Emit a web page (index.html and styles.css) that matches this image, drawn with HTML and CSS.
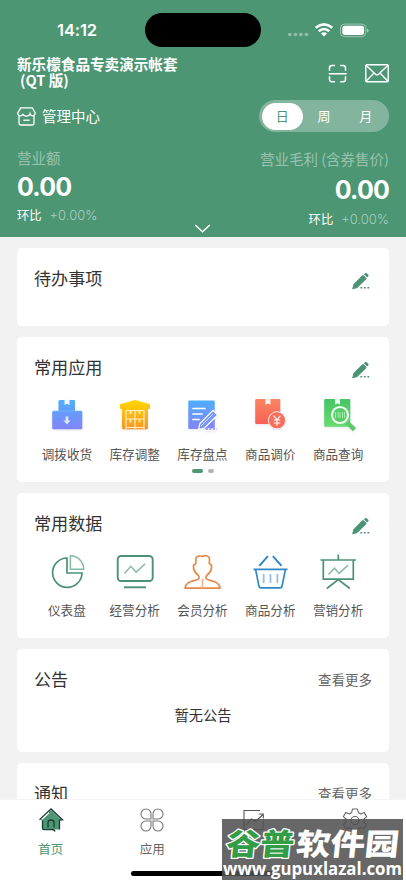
FILE: index.html
```html
<!DOCTYPE html>
<html lang="zh-CN">
<head>
<meta charset="utf-8">
<meta name="viewport" content="width=device-width, initial-scale=1">
<title>首页</title>
<link rel="stylesheet" href="styles.css">
</head>
<body>
<svg class="defs" width="0" height="0" aria-hidden="true">
  <defs>
    <linearGradient id="blue" x1="0" y1="0" x2="0" y2="1"><stop offset="0" stop-color="#4fadfc"/><stop offset="1" stop-color="#8384f8"/></linearGradient>
    <linearGradient id="gold" x1="0" y1="0" x2="0" y2="1"><stop offset="0" stop-color="#ffd900"/><stop offset="1" stop-color="#f99424"/></linearGradient>
    <linearGradient id="red" x1="0" y1="0" x2="0" y2="1"><stop offset="0" stop-color="#fb8562"/><stop offset="1" stop-color="#f76154"/></linearGradient>
    <linearGradient id="lime" x1="0" y1="0" x2="0" y2="1"><stop offset="0" stop-color="#46c567"/><stop offset="1" stop-color="#65dc6c"/></linearGradient>
    <symbol id="pencil" viewBox="0 0 18 18">
      <path d="M.7 16.8 2 12.3 10.900 3.300l3.400 3.200-9.200 9.100z" fill="#4b9374" stroke="#4b9374" stroke-width="1" stroke-linejoin="round"/>
      <path d="m11.900 2.300 1.200-1.100q.8-.7 1.600 0l1.600 1.600q.7.8 0 1.500l-1.100 1.200z" fill="#4b9374"/>
      <path d="M8.400 15.800h1.800M11.900 15.800h1.800M15.400 15.800h1.800" stroke="#4b9374" stroke-width="1.500"/>
    </symbol>
  </defs>
</svg>
<div class="phone">
  <header class="header">
    <div class="status">
      <span class="time">14:12</span>
      <span class="island"></span>
      <svg class="signals" width="84" height="20" viewBox="0 0 84 20" fill="#fff">
        <g opacity=".4"><circle cx="3.9" cy="14.5" r="1.8"/><circle cx="9.4" cy="14.5" r="1.8"/><circle cx="14.9" cy="14.5" r="1.8"/><circle cx="20.4" cy="14.5" r="1.8"/></g>
        <g fill="none" stroke="#fff" stroke-width="2.5"><path d="M29.700 7.800q8.300-6.800 16.600 0"/><path d="M32.700 11.200q5.300-4.400 10.600 0"/></g>
        <path d="M35 13.500q3-2.400 6 0l-3 3z"/>
        <rect x="54.5" y="4.1" width="25.3" height="12.6" rx="4" fill="none" stroke="#fff" opacity=".45"/>
        <rect x="56.3" y="5.8" width="21.8" height="9.1" rx="2.6"/><path d="M81 8.500q1.600.6 1.600 2t-1.600 2z" opacity=".5"/>
      </svg>
    </div>
    <div class="account">
      <h1 class="name"><span>新乐檬食品专卖演示帐套</span><span class="edition">(QT 版)</span></h1>
      <div class="actions">
        <svg width="20" height="20" viewBox="0 0 20 20" fill="none" stroke="#fff" stroke-width="1.5"><path d="M1.500 6.800V4q0-2.500 2.500-2.500h3M12.200 1.500H15q2.500 0 2.500 2.500v2.800M17.500 12.300v3q0 2.500-2.500 2.500h-2.800M7 17.800H4q-2.500 0-2.500-2.500v-3M.7 9.800h18"/></svg>
        <svg width="24" height="19" viewBox="0 0 24 19" fill="none" stroke="#fff" stroke-width="1.4"><rect x=".8" y=".8" width="22.400" height="17" rx="1"/><path d="m1 1.200 9.500 9q1.500 1.300 3 0l9.500-9M1 17.300l8-8.400M23 17.300l-8-8.400"/></svg>
      </div>
    </div>
    <div class="filters">
      <div class="center"><svg width="19" height="19" viewBox="0 0 19 19" fill="none" stroke="#fff" stroke-width="1.300"><path d="m3.700.8-2.900 5C.3 9.600 5.200 9.600 5.800 6.800c.7 3 6.400 3 7.200 0 .8 2.800 5.500 2.800 5.100-1l-2.800-5zM2 9v7q0 2 2 2h11q2 0 2-2V9"/><path d="M6.300 13.200h6.300"/></svg><span>管理中心</span></div>
      <div class="segment"><span class="active">日</span><span>周</span><span>月</span></div>
    </div>
    <div class="stats">
      <div class="stat"><div class="label">营业额</div><div class="value">0.00</div><div class="ratio">环比<span>+0.00%</span></div></div>
      <div class="stat right"><div class="label">营业毛利 (含券售价)</div><div class="value">0.00</div><div class="ratio">环比<span>+0.00%</span></div></div>
    </div>
    <svg class="expand" width="17" height="9" viewBox="0 0 17 9" fill="none" stroke="#fff" stroke-width="1.400"><path d="m1.200 1 7.300 6.700L15.800 1"/></svg>
  </header>

  <main class="content">
    <section class="card todo"><div class="card-head"><h2>待办事项</h2><svg class="edit"><use href="#pencil"/></svg></div></section>

    <section class="card apps">
      <div class="card-head"><h2>常用应用</h2><svg class="edit"><use href="#pencil"/></svg></div>
      <div class="grid">
        <div class="item"><svg viewBox="0 0 40 40"><path d="M13 5h14q1 0 1 1v10h6q1.300 0 1.300 1.300V33q0 1.300-1.300 1.300H6.500q-1.300 0-1.300-1.300V17.300q0-1.300 1.300-1.300h5V6q0-1 1.500-1z" fill="url(#blue)"/><path d="M17.500 5h5v5l-2.500-1.200-2.500 1.200z" fill="#eef7ff"/><path d="M6 16h28" stroke="#78bdff" stroke-width=".7"/><path d="M18.600 21.500h2.800v4h2.200L20 29.500l-3.600-4h2.200z" fill="#d9e4ff"/></svg><span>调拨收货</span></div>
        <div class="item"><svg viewBox="0 0 40 40"><path d="M5 9.200 20 5l15 4.200v4.500h-2V33q0 1.300-1.300 1.300H8.300Q7 34.300 7 33V13.700H5z" fill="url(#gold)"/><path d="M5 11h30" stroke="#ffc400"/><path d="M11 34V15.500h18V34M11 24h18M20 15.500V34M11 32.500h18" fill="none" stroke="#fff1c5" stroke-width="1.200"/><path d="M15.500 16v3M24.500 16v3M15.500 24.500v3M24.500 24.500v3" stroke="#fff1c5" fill="none" stroke-width="1.800"/></svg><span>库存调整</span></div>
        <div class="item"><svg viewBox="0 0 40 40"><path d="M7.500 5.500h24q1.200 0 1.200 1.200v26q0 1.200-1.200 1.200h-24q-1.200 0-1.200-1.200v-26q0-1.200 1.200-1.200z" fill="url(#blue)"/><path d="M11 13.500h12M11 19h9M11 24.500h6" stroke="#fff" stroke-width="1.700" stroke-linecap="round"/><path d="m16.500 34.500 1.400-6L31 15.400l4.600 4.500-13.300 13.200-5.800 1.400z" fill="#7897fa" stroke="#fff" stroke-width="1.200"/><path d="m19 31 12-12" stroke="#fff" stroke-width=".7"/><path d="M24 34.500h11" stroke="#fff" stroke-width="3"/><path d="M24 34h10.500" stroke="#8187ef" stroke-width="1.400" stroke-dasharray="2.300 1"/></svg><span>库存盘点</span></div>
        <div class="item"><svg viewBox="0 0 40 40"><path d="M6.500 4H29q1.300 0 1.300 1.300v22.400q0 1.300-1.300 1.300H6.500q-1.300 0-1.300-1.300V5.300Q5.200 4 6.500 4z" fill="url(#red)"/><path d="M15.500 4h5v5.700L18 8.400l-2.500 1.300z" fill="#fff2ed"/><circle cx="27" cy="25.300" r="8.600" fill="#f96d59" stroke="#fff" stroke-width=".9"/><path d="m23.500 20.700 3.500 4 3.500-4M27 24.700v6M23.700 25h6.600M23.700 28h6.600" fill="none" stroke="#fff" stroke-width="1.200"/></svg><span>商品调价</span></div>
        <div class="item"><svg viewBox="0 0 40 40"><path d="M7.500 4H31q1.300 0 1.300 1.300v25.200q0 1.300-1.300 1.300H7.500q-1.300 0-1.300-1.300V5.300Q6.200 4 7.500 4z" fill="url(#lime)"/><path d="M17 4h5v5.500l-2.500-1.200L17 9.500z" fill="#efffef"/><path d="m29 27.500 7.500 7.200" stroke="#5bc967" stroke-width="4.500"/><circle cx="22" cy="20" r="8" fill="#58ca6a" stroke="#f0fff0" stroke-width="2.200"/><path d="M17.500 17v6M20 17v6M22 17v6M24.500 17v6M26.500 17v6" stroke="#a2efa8" stroke-width="1.100"/></svg><span>商品查询</span></div>
      </div>
      <div class="pager"><i class="on"></i><i></i></div>
    </section>

    <section class="card data">
      <div class="card-head"><h2>常用数据</h2><svg class="edit"><use href="#pencil"/></svg></div>
      <div class="grid">
        <div class="item"><svg viewBox="0 0 40 40" fill="none" stroke="#4b9275" stroke-width="1.700"><path d="M20 6A14.700 14.700 0 1 0 35 21H20z"/><path d="M23.400 3.800v13.400h13.300A13.300 13.300 0 0 0 23.400 3.800z" stroke="#86b9a3" stroke-width="1.500"/></svg><span>仪表盘</span></div>
        <div class="item"><svg viewBox="0 0 40 40" fill="none" stroke="#4b9275" stroke-width="1.900"><rect x="2.700" y="4" width="35" height="25" rx="3.500"/><path d="M9 35.300h22"/><path d="m9.500 21.500 6.300-7.200 5.400 5.800 9-8.300" stroke="#8bbba7" stroke-width="1.500"/></svg><span>经营分析</span></div>
        <div class="item"><svg viewBox="0 0 40 40" fill="none" stroke="#e78849" stroke-width="1.700" stroke-linejoin="round"><path d="M13.900 6C15 3.500 19 3.800 20.500 4.500 23 3 26.500 3.500 27.500 6.200l-.2 5.300 2.300 2c.3 4-1.700 7.500-4.500 9.500-1.500 1.600-1.500 3.500.3 4.500 5 2 11.700 1.800 12.700 8.600H3c.9-6.800 7.700-6.600 12.700-8.600 1.800-1 1.800-2.900.3-4.500-2.800-2-4.800-5.500-4.500-9.500l2.300-2z"/><path d="M20.500 27v9" stroke="#f2b48f"/></svg><span>会员分析</span></div>
        <div class="item"><svg viewBox="0 0 40 40" fill="none" stroke="#2e88c6" stroke-width="1.700"><path d="m9.300 13.800 8.600-9.600M31.500 13.800l-8.600-9.600" stroke-width="2"/><path d="M3.500 17.300h34M5.600 17.300l3.300 16.500q.3 2 2.200 2h18.800q1.900 0 2.200-2l3.300-16.500"/><path d="M13.700 22v9M20.500 22v9M27.400 22v9" stroke="#91bcdf"/></svg><span>商品分析</span></div>
        <div class="item"><svg viewBox="0 0 40 40" fill="none" stroke="#4b9275" stroke-width="1.700"><path d="M2.500 8h35.500M20.300 2.500V8M5.300 8v19.200h30V8M8.800 36.500l11.500-9 11.500 9"/><path d="m10.500 22.500 6-6.300 4.600 5.200 9-8.300" stroke="#8bbba7" stroke-width="1.500"/></svg><span>营销分析</span></div>
      </div>
    </section>

    <section class="card notice"><div class="card-head"><h2>公告</h2><span class="more">查看更多</span></div><p class="empty">暂无公告</p></section>
    <section class="card messages"><div class="card-head"><h2>通知</h2><span class="more">查看更多</span></div></section>
  </main>

  <nav class="tabs">
    <div class="tab current"><svg viewBox="0 0 26 26"><path d="M2.500 13 13 3l10.500 10-1.500.6v9h-7l2.500 2.400-4-2.400H5v-9z" fill="#4b9675"/><path d="M1.500 12.800 13 2l11.500 10.800-3 .3v9.500M4.500 13.300v8q0 1.300 1.300 1.300h7.500q3.500-.5 3.500 2M10 20.500v-5q0-2.500 3-2.500t3 2.500v5" fill="none" stroke="#1e3d30" stroke-width="1.300"/><path d="m4 12.200 7-6.500" stroke="#fff" stroke-width="1.200"/></svg><span>首页</span></div>
    <div class="tab"><svg viewBox="0 0 26 26" fill="none" stroke="#777" stroke-width="1.100"><path d="M12 12H7A5 5 0 1 1 12 7zM14 12V7a5 5 0 1 1 5 5zM12 14v5a5 5 0 1 1-5-5zM14 14h5a5 5 0 1 1-5 5z"/></svg><span>应用</span></div>
    <div class="tab"><svg viewBox="0 0 26 26" fill="none" stroke="#555" stroke-width="1.100"><path d="M19 3.500H3v19h19v-9M5 18l5.500-6 4 2.500 7.500-7M17.800 7h4.500v4.500"/></svg></div>
    <div class="tab"><svg viewBox="0 0 26 26" fill="none" stroke="#666" stroke-width="1.100"><path d="M10.500 2h5l.8 3.500 2.500 1.400 3.300-1.500 2.600 4.300L22 12v3l2.700 2.300-2.600 4.300-3.300-1.200-2.500 1.400-.8 3.200h-5l-.8-3.200-2.500-1.400-3.300 1.200-2.600-4.300L4 15v-3L1.300 9.700l2.600-4.300 3.300 1.500 2.500-1.400z" stroke-linejoin="round"/><circle cx="13" cy="13.500" r="4"/></svg></div>
    <div class="home-bar"></div>
  </nav>
  <div class="watermark">
    <svg width="181" height="61" viewBox="0 0 181 61">
      <g font-family="Noto Sans CJK SC, sans-serif" font-weight="900" font-size="30"><text transform="skewX(-6)" x="7" y="36.500" textLength="68" lengthAdjust="spacingAndGlyphs" fill="#329c46" stroke="#fff" stroke-width="2.500" stroke-linejoin="round" paint-order="stroke">谷普</text><text transform="skewX(-6)" x="77" y="36.500" textLength="103" lengthAdjust="spacingAndGlyphs" fill="#fff">软件园</text></g>
      <text x="1" y="55.500" textLength="179" lengthAdjust="spacingAndGlyphs" font-family="Open Sans, sans-serif" font-weight="700" font-size="17" fill="#fff">www.gupuxlazal.com</text>
    </svg>
  </div>
</div>
</body>
</html>
```

FILE: styles.css
```css
* { box-sizing: border-box; }
body { margin: 0; background: #f2f2f2; font-family: "Noto Sans CJK SC", sans-serif; color: #333; }
h1, h2, p { margin: 0; font-weight: 400; }
svg { display: block; flex: none; }
.defs { position: absolute; }
.phone { position: relative; width: 406px; height: 883px; overflow: hidden; display: flex; flex-direction: column; }

.header { position: relative; height: 237px; flex: none; background: #4c9674; color: #fff; padding: 0 17px; }
.status { height: 55px; display: grid; grid-template-columns: 128px 116px 1fr; align-items: start; }
.time { padding: 20px 0 0 40px; font: 600 16.5px/21px Inter, sans-serif; letter-spacing: -.1px; }
.island { margin-top: 13px; height: 34px; border-radius: 17px; background: #000; }
.signals { margin: 20px 0 0 25px; }
.account { height: 44px; display: flex; justify-content: space-between; }
.name { display: flex; flex-direction: column; font-size: 14.6px; line-height: 16px; font-weight: 700; padding-top: 1px; white-space: nowrap; }
.edition { padding-left: 3px; }
.actions { display: flex; gap: 17px; padding-top: 9px; }
.filters { display: flex; align-items: center; justify-content: space-between; height: 34px; }
.center { display: flex; gap: 6px; align-items: center; font-size: 14.5px; }
.center span { margin-top: -2px; }
.segment { display: grid; grid-template-columns: repeat(3, 1fr); width: 130px; height: 32px; padding: 2.5px; border-radius: 16px; background: #83b59e; font-size: 13px; line-height: 26px; text-align: center; }
.segment .active { background: #fff; color: #4c9674; border-radius: 14px; }
.stats { display: flex; justify-content: space-between; padding-top: 15px; }
.label { font-size: 14.5px; line-height: 20px; color: #98c3ae; }
.value { font: 700 25px/30px Inter, sans-serif; letter-spacing: -.8px; margin-top: 4px; }
.ratio { font-size: 12.3px; line-height: 18px; margin-top: 4px; }
.ratio span { margin-left: 8px; font-family: Inter, sans-serif; font-size: 13px; font-weight: 300; color: #a9cebc; }
.right { text-align: right; padding-top: 1px; }
.right .value { margin-top: 6px; }
.right .ratio { margin-top: 5px; }
.expand { position: absolute; left: 194px; bottom: 4px; }

.content { padding: 11px 17px 0; display: flex; flex-direction: column; gap: 11px; flex: 1; min-height: 0; overflow: hidden; }
.card { flex: none; background: #fff; border-radius: 5px; padding: 16px 17px 0; }
.todo { height: 78px; }
.apps, .data { height: 145px; }
.notice { height: 103px; }
.messages { height: 103px; }
.card-head { height: 28px; display: flex; justify-content: space-between; align-items: center; }
.card-head h2 { font-size: 17.1px; line-height: 28px; }
.edit { width: 18px; height: 18px; margin: 6px 2px 0 0; }
.more { font-size: 13.5px; color: #666; }
.grid { display: grid; grid-template-columns: repeat(5, 1fr); margin: 14px 0 0 -1px; }
.item { display: flex; flex-direction: column; align-items: center; font-size: 12.6px; line-height: 18px; color: #555; white-space: nowrap; gap: 10px; }
.item svg { width: 40px; height: 40px; }
.data .item svg { margin: 1px 0 -1px; }
.apps .item svg { filter: drop-shadow(0 1px 1px rgba(60, 80, 120, .15)); }
.pager { display: flex; justify-content: center; gap: 5px; margin-top: 6px; }
.pager i { width: 6px; height: 4px; border-radius: 2px; background: #b5b5b5; }
.pager .on { width: 11px; background: #4c9674; }
.empty { text-align: center; font-size: 14.3px; line-height: 20px; margin-top: 12px; }

.tabs { position: relative; flex: none; height: 84px; display: grid; grid-template-columns: repeat(4, 1fr); background: #fff; border-top: 1px solid #f4f4f4; }
.tab { display: flex; flex-direction: column; align-items: center; padding-top: 7px; gap: 7px; font-size: 12.5px; line-height: 18px; color: #666; }
.tab svg { width: 26px; height: 26px; }
.current { color: #4c9674; }
.home-bar { position: absolute; left: 131px; bottom: 7px; width: 144px; height: 5px; border-radius: 3px; background: #000; }
.watermark { position: absolute; left: 222px; top: 819px; width: 181px; height: 61px; background: rgba(80, 80, 80, .87); }
```
